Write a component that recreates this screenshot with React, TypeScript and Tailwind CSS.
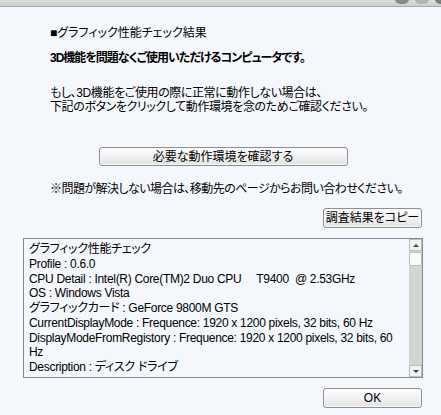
import React from 'react'

const font = "[font-family:'Liberation_Sans','Noto_Sans_CJK_JP',sans-serif] [font-feature-settings:'palt']"

function WinButton({ label, className }: { label: string; className: string }) {
  return (
    <button
      className={`${className} flex items-center justify-center rounded-[3px] border border-[#8e8f8f] bg-gradient-to-b from-[#ffffff] to-[#e3e3e3] text-[12px] text-black shadow-[inset_0_0_0_1px_#f8f8f8]`}
    >
      {label}
    </button>
  )
}

const lines = [
  'グラフィック性能チェック',
  'Profile : 0.6.0',
  'CPU Detail : Intel(R) Core(TM)2 Duo CPU     T9400  @ 2.53GHz',
  'OS : Windows Vista',
  'グラフィックカード : GeForce 9800M GTS',
  'CurrentDisplayMode : Frequence: 1920 x 1200 pixels, 32 bits, 60 Hz',
  'DisplayModeFromRegistory : Frequence: 1920 x 1200 pixels, 32 bits, 60',
  'Hz',
  'Description : ディスク ドライブ',
]

export default function App() {
  return (
    <div className={`${font} flex h-[415px] w-[441px] flex-col overflow-hidden bg-[#f4f7fc] text-black`}>
      {/* window title strip */}
      <div className="relative h-[7px] shrink-0 border-b border-[#a9a9a9] bg-gradient-to-b from-[#dcdcdc] to-[#cfcfcf]">
        <div className="absolute right-[-8px] top-[-6px] flex gap-[6px]">
          <span className="h-[10px] w-[14px] rounded-full bg-[#8a8a8a]" />
          <span className="h-[10px] w-[14px] rounded-full bg-[#b5b5b5]" />
          <span className="h-[10px] w-[14px] rounded-full bg-[#7d7d7d]" />
        </div>
      </div>

      <div className="flex flex-col px-[50px] pt-[19px] text-[12px] leading-[14px]">
        <p>■グラフィック性能チェック結果</p>
        <p className="mt-[11px] font-bold tracking-[-1px]">3D機能を問題なくご使用いただけるコンピュータです。</p>
        <p className="mt-[21px] tracking-[-0.4px]">もし、3D機能をご使用の際に正常に動作しない場合は、</p>
        <p className="tracking-[-0.4px]">下記のボタンをクリックして動作環境を念のためご確認ください。</p>
      </div>

      <div className="mt-[33px] flex justify-center pl-[5px]">
        <WinButton label="必要な動作環境を確認する" className="h-[19px] w-[249px]" />
      </div>

      <p className="mt-[16px] pl-[50px] text-[12px] leading-[14px] tracking-[-0.55px]">
        ※問題が解決しない場合は、移動先のページからお問い合わせください。
      </p>

      <div className="mt-[12px] flex justify-end pr-[19px]">
        <WinButton label="調査結果をコピー" className="h-[20px] w-[99px]" />
      </div>

      {/* result text box */}
      <div className="ml-[23px] mr-[18px] mt-[10px] flex h-[140px] border border-[#828790] bg-[#f4f7fc]">
        <div className="flex-1 overflow-hidden pl-[5px] pt-[3px] text-[12px] leading-[14.75px] tracking-[-0.3px]">
          {lines.map((l, i) => (
            <div key={i} className="whitespace-pre">{l}</div>
          ))}
        </div>
        <div className="flex w-[13px] flex-col bg-[#d4d4d4]">
          <div className="flex h-[12px] items-center justify-center border border-[#bdbdbd] bg-[#f2f2f2]">
            <span className="h-0 w-0 border-x-[3px] border-b-[3px] border-x-transparent border-b-[#444]" />
          </div>
          <div className="mt-[1px] h-[14px] rounded-[2px] border border-[#bdbdbd] bg-[#fafafa]" />
          <div className="flex-1" />
          <div className="flex h-[12px] items-center justify-center border border-[#bdbdbd] bg-[#f2f2f2]">
            <span className="h-0 w-0 border-x-[3px] border-t-[3px] border-x-transparent border-t-[#444]" />
          </div>
        </div>
      </div>

      <div className="mt-[10px] flex justify-end pr-[19px]">
        <WinButton label="OK" className="h-[20px] w-[99px]" />
      </div>
    </div>
  )
}
